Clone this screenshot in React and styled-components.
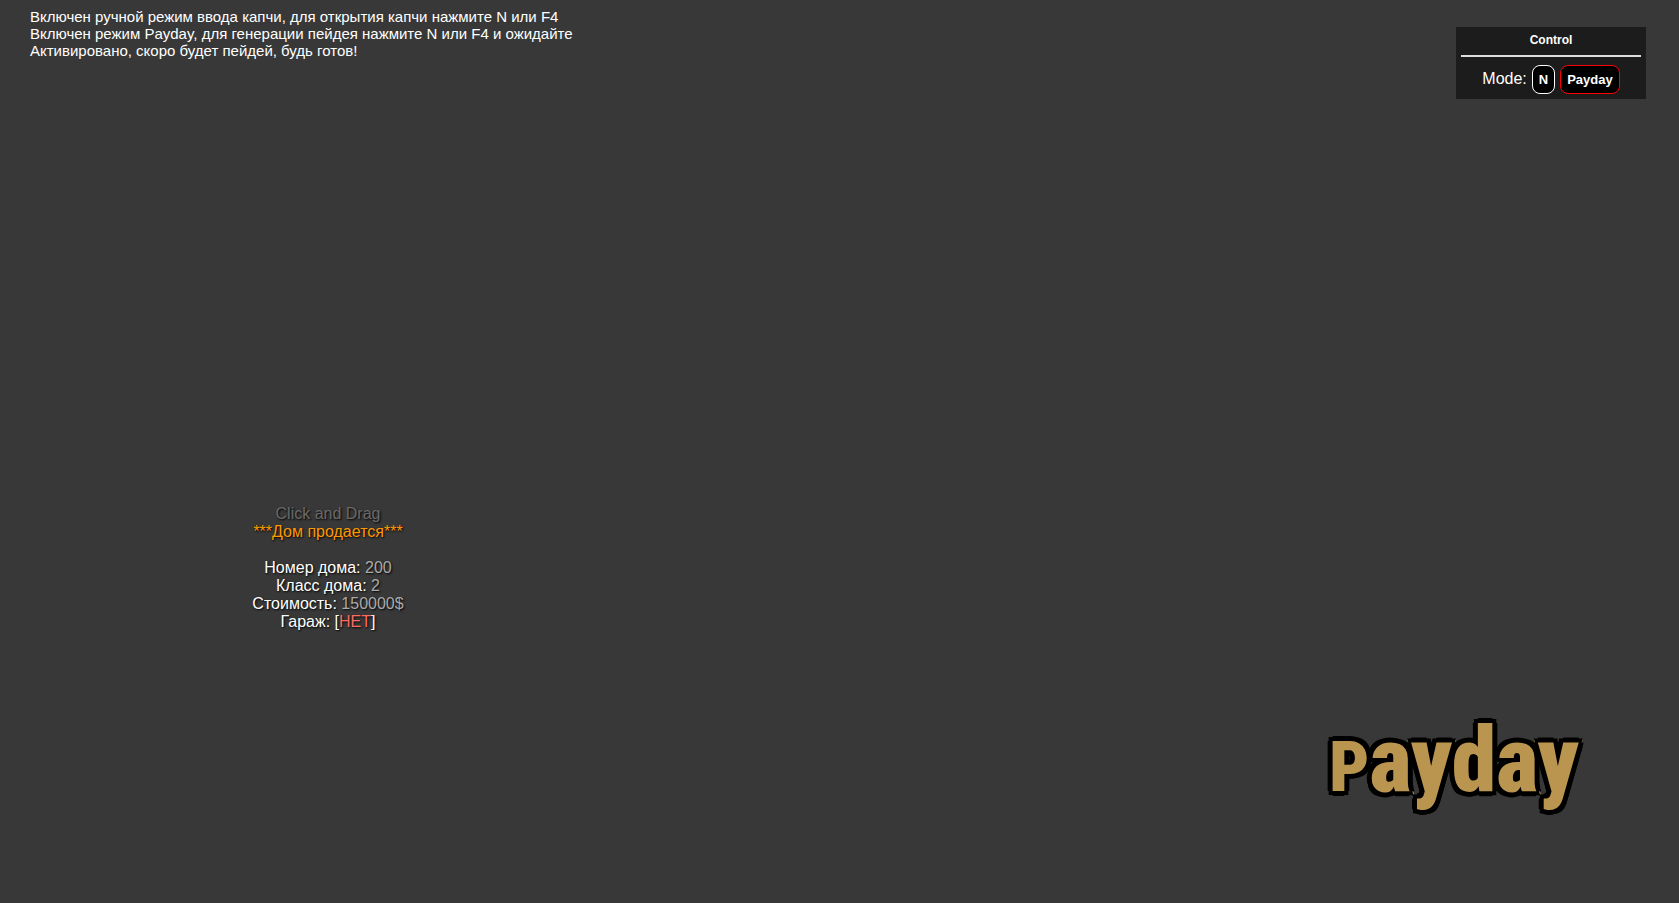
import React, { useState } from "react";
import styled, { createGlobalStyle } from "styled-components";

const GlobalStyle = createGlobalStyle`
  * {
    box-sizing: border-box;
  }

  body {
    margin: 0;
    background-color: #383838;
    color: #fff;
    font-family: "Liberation Sans", Arial, sans-serif;
  }
`;

const Screen = styled.main`
  display: flex;
  flex-direction: column;
  min-height: 100vh;
  padding: 8px 33px 84px 30px;
`;

const TopBar = styled.header`
  display: flex;
  justify-content: space-between;
  align-items: flex-start;
`;

const Chat = styled.ul`
  margin: 0;
  padding: 0;
  list-style: none;
  font-size: 15px;
  line-height: 17px;
`;

const Panel = styled.section`
  width: 190px;
  margin-top: 19px;
  padding: 5px;
  background-color: #1c1c1c;
`;

const PanelTitle = styled.h2`
  margin: 0;
  padding-bottom: 7px;
  border-bottom: 2px solid #ddd;
  font-size: 12px;
  line-height: 16px;
  text-align: center;
`;

const Modes = styled.div`
  display: flex;
  justify-content: center;
  align-items: baseline;
  gap: 5px;
  padding-top: 8px;
`;

const ModeButton = styled.button`
  height: 29px;
  padding: 0 6px;
  border: 1px solid ${({ $active }) => ($active ? "#f00" : "#fff")};
  border-radius: 8px;
  background-color: #000;
  color: #fff;
  font: bold 13px "Liberation Sans", Arial, sans-serif;
  cursor: pointer;
`;

const House = styled.section`
  width: 152px;
  margin-top: 406px;
  margin-left: 222px;
  font-size: 16px;
  line-height: 18px;
  text-align: center;
  text-shadow: 1px 1px 2px #000;
  white-space: nowrap;
  cursor: move;
`;

const Line = styled.p`
  min-height: 18px;
  margin: 0;
  color: ${({ $color }) => $color || "#fff"};
`;

const Value = styled.span`
  color: ${({ $color }) => $color || "#aaa"};
`;

const Logo = styled.h1`
  align-self: flex-end;
  margin: auto 67px 0 0;
  color: #b9954f;
  font: 900 90px "Roboto Condensed", Roboto, sans-serif;
  line-height: 104px;
  -webkit-text-stroke: 6px #b9954f;
  paint-order: stroke fill;
  text-shadow: 5px 0 #000, -5px 0 #000, 0 5px #000, 0 -5px #000, 4px 4px #000,
    -4px 4px #000, 4px -4px #000, -4px -4px #000;
`;

const LogoCap = styled.span`
  font-size: 70px;
`;

const messages = [
  "Включен ручной режим ввода капчи, для открытия капчи нажмите N или F4",
  "Включен режим Payday, для генерации пейдея нажмите N или F4 и ожидайте",
  "Активировано, скоро будет пейдей, будь готов!",
];

const modes = ["N", "Payday"];

const App = () => {
  const [mode, setMode] = useState("Payday");

  return (
    <>
      <GlobalStyle />
      <Screen>
        <TopBar>
          <Chat>
            {messages.map((message) => (
              <li key={message}>{message}</li>
            ))}
          </Chat>
          <Panel>
            <PanelTitle>Control</PanelTitle>
            <Modes>
              <span>Mode:</span>
              {modes.map((name) => (
                <ModeButton
                  key={name}
                  type="button"
                  $active={name === mode}
                  onClick={() => setMode(name)}
                >
                  {name}
                </ModeButton>
              ))}
            </Modes>
          </Panel>
        </TopBar>

        <House>
          <Line $color="#6a6a6a">Click and Drag</Line>
          <Line $color="#ff9800">***Дом продается***</Line>
          <Line />
          <Line>
            Номер дома: <Value>200</Value>
          </Line>
          <Line>
            Класс дома: <Value>2</Value>
          </Line>
          <Line>
            Стоимость: <Value>150000$</Value>
          </Line>
          <Line>
            Гараж: [<Value $color="#ff6b61">НЕТ</Value>]
          </Line>
        </House>

        <Logo>
          <LogoCap>P</LogoCap>ayday
        </Logo>
      </Screen>
    </>
  );
};

export default App;
